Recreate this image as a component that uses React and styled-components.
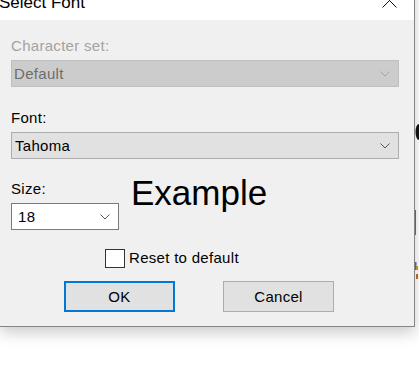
import React from "react";
import styled, { createGlobalStyle, css } from "styled-components";

const GlobalStyle = createGlobalStyle`
  html, body {
    margin: 0;
    padding: 0;
    background: #ffffff;
    overflow: hidden;
  }
  body {
    font-family: "Liberation Sans", Arial, sans-serif;
    font-size: 15px;
    letter-spacing: 0.3px;
    color: #000;
  }
`;

const Page = styled.div`
  display: flex;
  align-items: flex-start;
  width: 419px;
  height: 367px;
  overflow: hidden;
`;

const Dialog = styled.div`
  display: flex;
  flex-direction: column;
  width: 415px;
  margin-top: -19px;
  box-sizing: border-box;
  border-right: 1px solid #858585;
  border-bottom: 1px solid #858585;
  box-shadow: 0 6px 14px rgba(0, 0, 0, 0.2);
  flex-shrink: 0;
`;

const TitleBar = styled.div`
  display: flex;
  align-items: center;
  justify-content: space-between;
  height: 39px;
  background: #ffffff;
`;

const Title = styled.div`
  font-size: 17px;
  line-height: 19px;
  letter-spacing: 0;
  padding-top: 3px;
  margin-left: -1px;
`;

const CloseButton = styled.div`
  display: flex;
  align-items: center;
  justify-content: center;
  width: 50px;
  height: 39px;
`;

const Client = styled.div`
  display: flex;
  flex-direction: column;
  align-items: flex-start;
  background: #f0f0f0;
  padding: 16px 15px 14px 11px;
`;

const Label = styled.div`
  line-height: 20px;
  color: ${(p) => (p.$disabled ? "#a3a3a3" : "#000")};
  margin-top: ${(p) => p.$top || 0}px;
`;

const comboVariants = {
  disabled: css`
    background: #cccccc;
    border-color: #bfbfbf;
    color: #6d6d6d;
    padding-left: 2px;
  `,
  list: css`
    background: #e1e1e1;
    border-color: #adadad;
    color: #000;
    padding-left: 3px;
  `,
  edit: css`
    background: #ffffff;
    border-color: #7a7a7a;
    color: #000;
    padding-left: 6px;
  `,
};

const Combo = styled.div`
  display: flex;
  align-items: center;
  justify-content: space-between;
  box-sizing: border-box;
  width: ${(p) => p.$width || 388}px;
  height: 27px;
  margin-top: 4px;
  padding-right: 8px;
  border: 1px solid;
  line-height: 20px;
  ${(p) => comboVariants[p.$variant || "list"]}
`;

const SizeRow = styled.div`
  display: flex;
  align-items: flex-start;
  gap: 12px;
  margin-top: 20px;
`;

const SizeColumn = styled.div`
  display: flex;
  flex-direction: column;
`;

const Example = styled.div`
  font-size: 35px;
  line-height: 28px;
  letter-spacing: 0;
`;

const CheckRow = styled.div`
  display: flex;
  align-items: center;
  gap: 4px;
  margin-top: 18px;
  margin-left: 94px;
  line-height: 20px;
`;

const CheckBox = styled.div`
  box-sizing: border-box;
  width: 20px;
  height: 19px;
  background: #ffffff;
  border: 1px solid #333333;
`;

const ButtonRow = styled.div`
  display: flex;
  gap: 48px;
  margin-top: 13px;
  margin-left: 53px;
`;

const Button = styled.div`
  display: flex;
  align-items: center;
  justify-content: center;
  box-sizing: border-box;
  width: 111px;
  height: 31px;
  background: #e1e1e1;
  border: ${(p) => (p.$default ? "2px solid #0078d7" : "1px solid #adadad")};
`;

const Edge = styled.svg`
  display: block;
  flex-shrink: 0;
`;

const Chevron = ({ color = "#555" }) => (
  <svg width="10" height="6" viewBox="0 0 10 6">
    <path d="M0.5 0.5 L5 5 L9.5 0.5" fill="none" stroke={color} strokeWidth="1" />
  </svg>
);

const App = () => (
  <>
    <GlobalStyle />
    <Page>
      <Dialog>
        <TitleBar>
          <Title>Select Font</Title>
          <CloseButton>
            <svg width="15" height="15" viewBox="0 0 15 15">
              <path d="M0.5 0.5 L14.5 14.5 M14.5 0.5 L0.5 14.5" stroke="#111" strokeWidth="1" />
            </svg>
          </CloseButton>
        </TitleBar>
        <Client>
          <Label $disabled>Character set:</Label>
          <Combo $variant="disabled">
            <span>Default</span>
            <Chevron color="#a8a8a8" />
          </Combo>

          <Label $top={21}>Font:</Label>
          <Combo $variant="list">
            <span>Tahoma</span>
            <Chevron />
          </Combo>

          <SizeRow>
            <SizeColumn>
              <Label>Size:</Label>
              <Combo $variant="edit" $width={108}>
                <span>18</span>
                <Chevron />
              </Combo>
            </SizeColumn>
            <Example>Example</Example>
          </SizeRow>

          <CheckRow>
            <CheckBox />
            <span>Reset to default</span>
          </CheckRow>

          <ButtonRow>
            <Button $default>OK</Button>
            <Button>Cancel</Button>
          </ButtonRow>
        </Client>
      </Dialog>
      <Edge width="4" height="367" viewBox="0 0 4 367">
        <ellipse cx="4" cy="132" rx="3.5" ry="8" fill="#111" />
        <rect x="0" y="210" width="1" height="25" fill="#2a6fc0" />
        <rect x="0" y="262" width="1.5" height="8" fill="#2a6fc0" />
        <rect x="1" y="266" width="2" height="4" fill="#c98a2a" />
        <rect x="1" y="274" width="2" height="5" fill="#b8651f" />
      </Edge>
    </Page>
  </>
);

export default App;
